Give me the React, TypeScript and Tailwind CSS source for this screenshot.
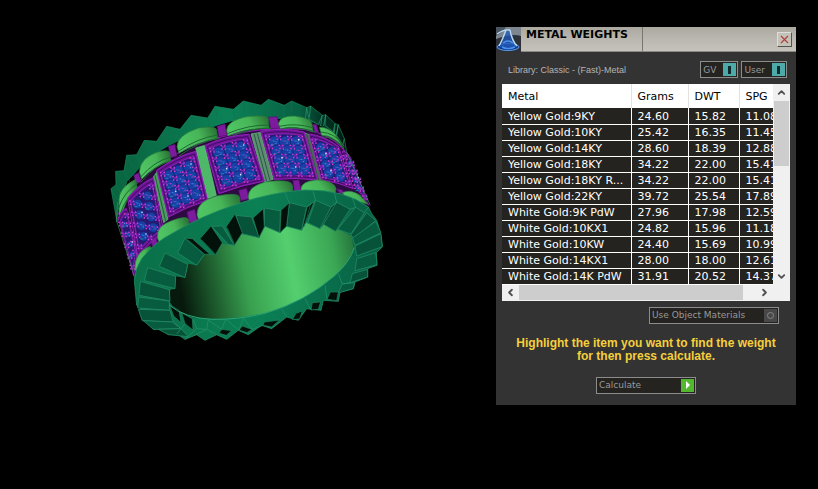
import React from "react";
import { ChevronDown, ChevronLeft, ChevronRight, ChevronUp } from "lucide-react";

// TYPES
type Point = [number, number];

interface Metal {
  name: string;
  grams: string;
  dwt: string;
  spg: string;
}

const METALS: Metal[] = [
  { name: "Yellow Gold:9KY", grams: "24.60", dwt: "15.82", spg: "11.08" },
  { name: "Yellow Gold:10KY", grams: "25.42", dwt: "16.35", spg: "11.45" },
  { name: "Yellow Gold:14KY", grams: "28.60", dwt: "18.39", spg: "12.88" },
  { name: "Yellow Gold:18KY", grams: "34.22", dwt: "22.00", spg: "15.41" },
  { name: "Yellow Gold:18KY R...", grams: "34.22", dwt: "22.00", spg: "15.41" },
  { name: "Yellow Gold:22KY", grams: "39.72", dwt: "25.54", spg: "17.89" },
  { name: "White Gold:9K PdW", grams: "27.96", dwt: "17.98", spg: "12.59" },
  { name: "White Gold:10KX1", grams: "24.82", dwt: "15.96", spg: "11.18" },
  { name: "White Gold:10KW", grams: "24.40", dwt: "15.69", spg: "10.99" },
  { name: "White Gold:14KX1", grams: "28.00", dwt: "18.00", spg: "12.61" },
  { name: "White Gold:14K PdW", grams: "31.91", dwt: "20.52", spg: "14.37" },
];

// RING GEOMETRY
// corners run top left, top right, bottom right, bottom left
const STONE_PANELS: { corners: Point[]; cols: number; size: number }[] = [
  { corners: [[40, 378], [64, 350], [95, 488], [86, 552]], cols: 1, size: 9 },
  { corners: [[68, 318], [145, 257], [176, 420], [98, 492]], cols: 2, size: 14 },
  { corners: [[155, 235], [272, 178], [308, 325], [190, 375]], cols: 3, size: 17 },
  { corners: [[300, 160], [432, 127], [478, 267], [342, 305]], cols: 3, size: 18 },
  { corners: [[467, 118], [598, 120], [638, 264], [508, 262]], cols: 3, size: 18 },
  { corners: [[612, 126], [700, 163], [745, 290], [650, 264]], cols: 2, size: 16 },
  { corners: [[712, 178], [738, 200], [790, 338], [755, 292]], cols: 1, size: 10 },
];

const BARS = [
  { points: "145,255 157,238 189,382 176,392", fill: "#43a058" },
  { points: "272,168 299,160 334,310 307,320", fill: "#4db968" },
  { points: "438,126 466,121 505,262 479,270", fill: "#5c8f70" },
  { points: "597,122 613,128 653,267 634,265", fill: "#4f6660" },
];

const BACK_TEETH: Point[] = [
  [28, 345], [18, 290], [33, 278], [32, 238], [57, 236], [65, 190], [95, 188],
  [118, 145], [155, 148], [185, 103], [225, 112], [258, 70], [308, 78], [330, 43],
  [385, 52], [415, 27], [468, 40], [490, 22], [538, 40], [560, 27], [605, 47],
  [617, 42], [652, 70], [662, 68], [690, 95], [700, 98], [718, 140], [725, 180],
];

const BACK_PADS = [
  "M42 330Q38 288 92 262L97 288Q70 308 56 350L42 385Z",
  "M103 240Q105 195 165 178Q195 172 195 186L197 208Q150 218 110 262Z",
  "M216 165Q215 130 280 108Q335 100 335 115L338 140Q280 147 222 184Z",
  "M365 115Q366 85 430 73Q490 68 490 81L493 110Q430 106 368 132Z",
  "M520 95Q525 70 570 72Q615 78 620 92L625 120Q570 100 526 110Z",
  "M643 106Q662 102 690 125L716 168Q685 130 650 130Z",
];

const BACK_PAD_EDGES = [
  "M45 368Q62 314 100 286M40 350Q58 298 96 276",
  "M108 270Q150 218 202 204M106 256Q150 206 196 196",
  "M222 192Q278 150 345 138M220 178Q278 138 338 129",
  "M368 138Q430 108 500 108M367 125Q430 98 492 99",
  "M524 112Q575 100 632 120M522 103Q575 92 622 107",
  "M650 134Q692 136 718 172M648 120Q690 124 712 155",
];

const FRONT_PADS = [
  "M90 535Q86 482 135 463L146 475L140 500L97 540Z",
  "M158 440Q152 402 200 386Q246 370 250 382L252 400L165 455Z",
  "M276 368Q275 328 335 312Q400 300 404 316L406 345L282 388Z",
  "M430 315Q428 285 480 270Q555 260 562 279L564 310L435 335Z",
  "M588 290Q590 268 635 264Q688 266 693 290L690 310L593 306Z",
  "M712 302Q735 290 765 310L788 336L725 320Z",
];

const CONNECTORS = [
  "86,250 101,242 109,270 94,274",
  "190,162 210,157 216,192 197,197",
  "336,103 360,96 366,130 341,134",
  "490,76 516,74 525,108 497,110",
  "622,97 634,97 641,120 630,122",
  "138,446 154,440 162,470 146,476",
  "246,360 269,352 277,386 253,394",
  "401,295 425,289 432,320 408,326",
  "564,265 582,264 590,300 568,302",
  "695,290 712,294 718,306 703,304",
];

const FACETS = [
  "240,438 298,487 275,520 218,483",
  "180,483 248,517 240,557 163,523",
  "128,527 212,553 210,590 118,566",
  "106,568 193,593 195,627 102,610",
  "101,615 193,627 193,655 98,648",
  "100,652 195,655 205,690 112,686",
  "115,686 205,690 228,710 145,712",
  "160,712 228,710 250,734 190,728",
  "320,403 352,402 388,460 370,457",
  "393,370 440,375 463,437 410,425",
  "478,348 526,356 525,422 478,402",
  "553,332 605,345 590,415 545,403",
  "632,325 678,345 645,410 608,392",
  "695,330 735,352 692,418 655,397",
  "752,346 778,362 738,426 698,412",
  "785,362 812,386 745,440 738,428",
  "812,388 828,422 750,460 743,438",
  "828,425 832,464 755,492 750,462",
  "812,482 816,518 750,536 755,500",
  "788,532 788,555 735,572 742,545",
  "748,572 745,590 700,603 712,576",
];

const GAPS = [
  "285,440 318,402 352,452 331,489",
  "240,438 262,440 315,487 298,487",
  "363,405 390,366 412,422 388,460",
  "444,378 475,350 478,405 462,437",
  "528,355 553,332 545,402 525,422",
  "606,346 628,328 604,388 591,412",
  "679,346 694,332 656,395 646,408",
  "193,638 222,655 228,692 206,672",
  "230,662 262,680 264,714 240,695",
  "350,712 380,716 364,730 342,724",
  "412,702 441,712 426,722 402,714",
  "478,690 524,684 500,705 474,700",
  "573,664 592,657 584,681 562,683",
  "622,632 647,630 640,652 618,654",
  "676,600 700,600 695,626 666,622",
];

const pts = (list: Point[]) => list.map((p) => p.join(",")).join(" ");

// place u/v (0..1) inside a skewed four-corner panel
function inPanel([tl, tr, br, bl]: Point[], u: number, v: number): Point {
  const at = (i: 0 | 1) =>
    (tl[i] * (1 - u) + tr[i] * u) * (1 - v) + (bl[i] * (1 - u) + br[i] * u) * v;
  return [Math.round(at(0)), Math.round(at(1))];
}

function inset(corners: Point[], d: number): Point[] {
  return [
    inPanel(corners, d, d),
    inPanel(corners, 1 - d, d),
    inPanel(corners, 1 - d, 1 - d),
    inPanel(corners, d, 1 - d),
  ];
}

function bowed(corners: Point[], lift: number) {
  const [tl, tr, br, bl] = corners;
  return `M${tl}Q${(tl[0] + tr[0]) / 2} ${(tl[1] + tr[1]) / 2 - lift} ${tr}L${br}Q${(bl[0] + br[0]) / 2} ${
    (bl[1] + br[1]) / 2 - lift / 2
  } ${bl}Z`;
}

function StonePanel({ corners, cols, size }: { corners: Point[]; cols: number; size: number }) {
  const rows = 4;
  const bed = inset(corners, 0.12);
  const stones = Array.from({ length: cols * rows }, (_, i) =>
    inPanel(bed, ((i % cols) + 0.5) / cols, (Math.floor(i / cols) + 0.5) / rows)
  );
  const prongs = Array.from({ length: (cols + 1) * (rows + 1) }, (_, i) =>
    inPanel(bed, (i % (cols + 1)) / cols, Math.floor(i / (cols + 1)) / rows)
  );

  return (
    <g>
      <path d={bowed(corners, 14)} fill="#6d1596" stroke="#8f22b8" strokeWidth="3" />
      <path d={bowed(inset(corners, 0.04), 12)} fill="none" stroke="#3c0b5c" strokeWidth="2.5" />
      <path d={bowed(inset(corners, 0.08), 10)} fill="#2b1774" stroke="#a32bc6" strokeWidth="2" />
      {stones.map(([x, y], i) => (
        <g key={i}>
          <circle cx={x} cy={y} r={size} fill="#173fa6" stroke="#10256f" strokeWidth="2" />
          <path
            d={`M${x - size * 0.5} ${y - 4}l${size} 3M${x} ${y + 5}l${size * 0.5} -3`}
            stroke="#1f62b4"
            strokeWidth="3"
          />
        </g>
      ))}
      {prongs.map(([x, y], i) => (
        <g key={i}>
          <path d={`M${x - 9} ${y - 5}l18 10M${x + 6} ${y - 8}l-12 16`} stroke="#7325b5" strokeWidth="3.5" />
          <path
            d={`M${x - 6} ${y - 6}v4M${x + 5} ${y - 5}v4M${x - 4} ${y + 4}v4M${x + 6} ${y + 5}v4`}
            stroke="#cf3fc6"
            strokeWidth="4"
          />
        </g>
      ))}
      {stones.map(([x, y], i) => (
        <g key={i}>
          <path d={`M${x - 3} ${y - 3}h3M${x + 4} ${y + 4}h3`} stroke={i % 2 ? "#b934bf" : "#4f7be0"} strokeWidth="3.5" />
          {i % 4 === 2 && <circle cx={x + 7} cy={y - 7} r="2.5" fill="#d9e6ff" />}
          {i % 3 === 0 && <path d={`M${x - 10} ${y + 8}h9`} stroke="#2aa09a" strokeWidth="2" />}
        </g>
      ))}
    </g>
  );
}

function Ring() {
  return (
    <svg viewBox="0 0 855 756" className="w-[285px] max-w-full" role="img" aria-label="Ring model">
      <defs>
        <linearGradient id="bore" x1="0" x2="1" y1="0.1" y2="0">
          <stop offset="0" stopColor="#07190c" />
          <stop offset="0.1" stopColor="#123f1f" />
          <stop offset="0.36" stopColor="#38a04f" />
          <stop offset="0.62" stopColor="#54cf6f" />
          <stop offset="0.86" stopColor="#3aa654" />
          <stop offset="1" stopColor="#236e38" />
        </linearGradient>
        <linearGradient id="pad" x1="0" x2="1" y1="0.3" y2="0">
          <stop offset="0" stopColor="#4fc463" />
          <stop offset="0.5" stopColor="#47b558" />
          <stop offset="1" stopColor="#256c31" />
        </linearGradient>
        <linearGradient id="rim" x1="0" x2="1">
          <stop offset="0" stopColor="#0a7049" />
          <stop offset="0.5" stopColor="#0b8055" />
          <stop offset="1" stopColor="#086044" />
        </linearGradient>
        <linearGradient id="backRim" x1="0" x2="1">
          <stop offset="0" stopColor="#09643f" />
          <stop offset="0.5" stopColor="#0c8157" />
          <stop offset="0.8" stopColor="#086144" />
          <stop offset="0.9" stopColor="#033323" />
          <stop offset="1" stopColor="#021a11" />
        </linearGradient>
      </defs>

      {/* back rim */}
      <polygon
        points={`${pts(BACK_TEETH)} 700,150 620,100 500,85 380,98 230,145 130,200 66,268 42,340 36,390`}
        fill="url(#backRim)"
        stroke="#1a8a61"
        strokeWidth="2"
      />
      {BACK_TEETH.slice(1, -1).map(([x, y], i) => (
        <path
          key={i}
          d={`M${x} ${y}L${x + (360 - x) * 0.04 + 6} ${y + 34}`}
          stroke={i > 18 ? "#2ba173" : "#0a7450"}
          strokeWidth="2"
        />
      ))}
      <path d="M605 47L612 82L640 98L652 70M662 68L660 100L688 122L690 95M700 98L695 130L718 165" fill="none" stroke="#2a9a70" strokeWidth="2" />

      {/* band */}
      <path
        d="M38 375Q50 275 130 200Q230 130 380 88Q500 70 625 92Q695 120 725 180L795 345L600 310L250 410L92 560Z"
        fill="#0c0712"
      />
      <path d="M48 372Q66 300 145 235Q230 178 300 150Q450 98 600 110Q680 122 722 180L795 345L600 310L250 410L92 560Z" fill="#2d0b42" />
      <path d="M40 368Q70 285 150 226Q240 165 300 148Q450 100 600 112Q690 130 722 182" fill="none" stroke="#8d1bb4" strokeWidth="4" />
      {CONNECTORS.map((p) => (
        <polygon key={p} points={p} fill="#7d1b9f" stroke="#4e1068" strokeWidth="2" />
      ))}
      {BACK_PADS.map((d) => (
        <path key={d} d={d} fill="url(#pad)" stroke="#227538" strokeWidth="2" />
      ))}
      {BACK_PAD_EDGES.map((d) => (
        <path key={d} d={d} fill="none" stroke="#1c6a30" strokeWidth="3" />
      ))}
      {BARS.map(({ points, fill }) => (
        <polygon key={points} points={points} fill={fill} stroke="#6bbd85" strokeWidth="2" />
      ))}
      <path d="M150 250l32 138M447 126l38 142M457 124l38 142M605 126l36 140" stroke="#2c5945" strokeWidth="3" />
      {STONE_PANELS.map((panel) => (
        <StonePanel key={panel.corners[0].join()} {...panel} />
      ))}
      <path d="M38 330L34 384L90 558M725 180L796 340" fill="none" stroke="#3f8d62" strokeWidth="2" />
      {FRONT_PADS.map((d) => (
        <path key={d} d={d} fill="url(#pad)" stroke="#2b8040" strokeWidth="2" />
      ))}

      {/* front rim */}
      <path
        d="M88 565Q90 530 110 500Q150 450 200 425Q290 370 400 335Q500 300 600 294Q720 292 790 345L800 365L815 385L820 400L828 435L832 465L814 482L816 520L788 530L788 555L750 570L745 590L705 600L700 628L655 625L648 655L605 650L580 685L545 675L500 710L470 700L430 728L400 715L365 742L335 728L300 745L275 728L240 742L215 725L190 728L180 708L145 712L130 685L112 683L108 650L95 640Z"
        fill="url(#rim)"
        stroke="#218c63"
        strokeWidth="2.5"
      />
      <path
        d="M193 628L196 593L210 590L212 553L240 557L250 515L275 520L300 487L331 489L345 455L388 460L410 425L462 437L480 403L525 422L545 403L590 415L603 392L645 410L655 395L690 418L700 412L740 432L746 470Q735 510 690 550Q600 630 480 663Q350 690 260 675Q205 655 193 628Z"
        fill="url(#bore)"
      />
      {FACETS.map((p, i) => (
        <polygon key={p} points={p} fill={i % 2 ? "#06533a" : "#075b3f"} stroke="#228963" strokeWidth="2.5" />
      ))}
      {GAPS.map((p) => (
        <polygon key={p} points={p} fill="#02120b" stroke="#238560" strokeWidth="2" />
      ))}
      <path d="M248 444L300 488M290 444L331 486M367 408L388 455M616 340L597 405M684 345L650 405" stroke="#147452" strokeWidth="2" />
      <path
        d="M553 332L540 302M605 345L632 325L624 298M678 345L695 330L688 302M735 352L752 346L742 318M778 362L790 346"
        fill="none"
        stroke="#1f8f66"
        strokeWidth="2.5"
      />
      <path
        d="M193 640Q240 678 320 682Q400 684 480 664Q600 630 690 550Q735 510 748 466"
        fill="none"
        stroke="#2ba274"
        strokeWidth="3"
      />
      <path
        d="M265 682L275 710L305 712L310 684M305 712L335 728M310 684L350 712L362 682M275 710L240 742M305 712L272 728M362 682L402 714L415 678M415 678L441 712L474 700M205 692L228 710L240 695M228 710L215 726M530 650L545 675M600 620L618 654M660 580L666 622M700 545L712 576L735 572"
        fill="none"
        stroke="#218e67"
        strokeWidth="2.5"
      />
    </svg>
  );
}

function ToggleButton({ label }: { label: string }) {
  return (
    <button
      type="button"
      aria-pressed="true"
      className="flex h-[17px] items-center justify-between gap-1.5 border border-[#8c8c8c] bg-[#242320] pl-0.5 text-[9px] text-[#999]"
    >
      {label}
      <span className="flex h-[15px] w-[15px] items-center justify-center border border-[#242320] bg-[#4eaaa8]">
        <span className="h-2 w-[3px] bg-[#10292b]" />
      </span>
    </button>
  );
}

export default function App() {
  return (
    <div className="min-h-screen bg-black font-['DejaVu_Sans',sans-serif] text-[11px] leading-3">
      <div className="flex items-start">
        {/* VIEWPORT */}
        <main className="min-w-0 flex-1 pt-[92px] pl-[105px]">
          <Ring />
        </main>

        {/* METAL WEIGHTS */}
        <aside className="mt-[27px] mr-[22px] w-[300px] shrink-0 bg-[#333] pb-[11px]">
          <header className="flex h-[25px] items-stretch border-b border-[#8b8982] bg-linear-to-b from-[#aaa89f] via-[#b9b7af] to-[#c5c3bb]">
            <svg viewBox="0 0 25 25" className="h-[25px] w-[25px] shrink-0" aria-hidden="true">
              <rect width="25" height="25" fill="#2e3238" />
              <path d="M0 0h25v9Q16 6 0 12z" fill="#7d868e" />
              <path d="M0 0h10Q6 6 0 9z" fill="#4b5560" />
              <ellipse cx="12" cy="20" rx="11" ry="3.5" fill="#15408f" stroke="#5a9be6" />
              <path d="M10 4L4 20h16L15 4z" fill="#2258b8" fillOpacity="0.75" />
              <path d="M10 3Q6 14 3 19M14 3Q16 14 21 19M1 7Q8 2 14 3" stroke="#b9dcf5" strokeWidth="1.4" fill="none" />
              <path d="M7 16q5 -4 10 0M6 20q6 3 13 0" stroke="#4a92f0" strokeWidth="1.5" fill="none" />
            </svg>
            <h1 className="w-[122px] border-r border-[#77756e] pt-0.5 pl-[5px] text-[11px] leading-3 font-bold whitespace-nowrap text-black">
              METAL WEIGHTS
            </h1>
            <button
              type="button"
              aria-label="Close"
              className="mr-1 ml-auto flex h-[15px] w-[15px] items-center justify-center self-center border border-t-[#ddd] border-r-[#55534e] border-b-[#55534e] border-l-[#ddd] bg-[#c3c1b8]"
            >
              <svg viewBox="0 0 9 9" className="h-[9px] w-[9px]">
                <path d="M1 1l7 7M8 1l-7 7" stroke="#b43c38" strokeWidth="1.1" />
              </svg>
            </button>
          </header>

          <div className="flex items-center gap-[3px] pt-[9px] pr-[9px] pb-1.5 pl-3">
            <p className="mr-auto font-['Liberation_Sans',sans-serif] text-[9px] whitespace-nowrap text-[#b5b5b5]">
              Library: Classic - (Fast)-Metal
            </p>
            <ToggleButton label="GV" />
            <ToggleButton label="User" />
          </div>

          <div className="mx-1.5 bg-[#f0f0f0]">
            <div className="flex">
              <div className="min-w-0 flex-1 overflow-hidden">
                <table className="w-[292px] table-fixed border-collapse text-left text-white">
                  <colgroup>
                    <col className="w-[129px]" />
                    <col className="w-[57px]" />
                    <col className="w-[51px]" />
                    <col />
                  </colgroup>
                  <thead>
                    <tr className="h-6 bg-white text-black">
                      {["Metal", "Grams", "DWT", "SPG"].map((h) => (
                        <th key={h} className="border-r border-[#e2e2e2] p-0 pt-px pl-1.5 font-normal">
                          {h}
                        </th>
                      ))}
                    </tr>
                  </thead>
                  <tbody>
                    {METALS.map((m) => (
                      <tr key={m.name} className="h-4 border-b border-white bg-[#242320]">
                        <td className="border-r border-white p-0 pt-0.5 pl-1.5 whitespace-nowrap">{m.name}</td>
                        <td className="border-r border-white p-0 pt-0.5 pl-1.5">{m.grams}</td>
                        <td className="border-r border-white p-0 pt-0.5 pl-1.5">{m.dwt}</td>
                        <td className="p-0 pt-0.5 pl-1.5">{m.spg}</td>
                      </tr>
                    ))}
                  </tbody>
                </table>
              </div>
              <div className="flex w-[17px] flex-col items-center text-[#505050]">
                <button type="button" aria-label="Scroll up" className="flex h-[17px] items-center">
                  <ChevronUp size={11} strokeWidth={4} />
                </button>
                <div className="h-[65px] w-[15px] bg-[#cdcdcd]" />
                <button type="button" aria-label="Scroll down" className="mt-auto flex h-[17px] items-center">
                  <ChevronDown size={11} strokeWidth={4} />
                </button>
              </div>
            </div>
            <div className="flex h-4 items-center pr-[17px] text-[#505050]">
              <button type="button" aria-label="Scroll left" className="flex w-[17px] justify-center">
                <ChevronLeft size={11} strokeWidth={4} />
              </button>
              <div className="h-[15px] w-56 bg-[#cdcdcd]" />
              <button type="button" aria-label="Scroll right" className="ml-auto flex w-[17px] justify-center">
                <ChevronRight size={11} strokeWidth={4} />
              </button>
            </div>
          </div>

          <button
            type="button"
            className="mt-1.5 mr-[17px] ml-auto flex h-[17px] w-[130px] items-center justify-between border border-[#8c8c8c] bg-[#242320] pl-0.5 text-[9px] whitespace-nowrap text-[#999]"
          >
            Use Object Materials
            <span className="flex h-[15px] w-[15px] items-center justify-center border border-[#242320] bg-[#484848]">
              <span className="h-[7px] w-[7px] rounded-full border border-[#888]" />
            </span>
          </button>

          <p className="mt-[13px] px-4 text-center font-['Liberation_Sans',sans-serif] text-[12px] leading-[13px] font-bold text-[#f5cf3c]">
            Highlight the item you want to find the weight for then press calculate.
          </p>

          <button
            type="button"
            className="mx-auto mt-3.5 flex h-[17px] w-[100px] items-center justify-between border border-[#8c8c8c] bg-[#242320] pl-0.5 text-[9px] text-[#999]"
          >
            Calculate
            <span className="flex h-[15px] w-[15px] items-center justify-center border border-[#242320] bg-[#54b82e]">
              <svg viewBox="0 0 4 8" className="h-2 w-1">
                <path d="M0 0l4 4-4 4z" fill="#fff" />
              </svg>
            </span>
          </button>
        </aside>
      </div>
    </div>
  );
}
